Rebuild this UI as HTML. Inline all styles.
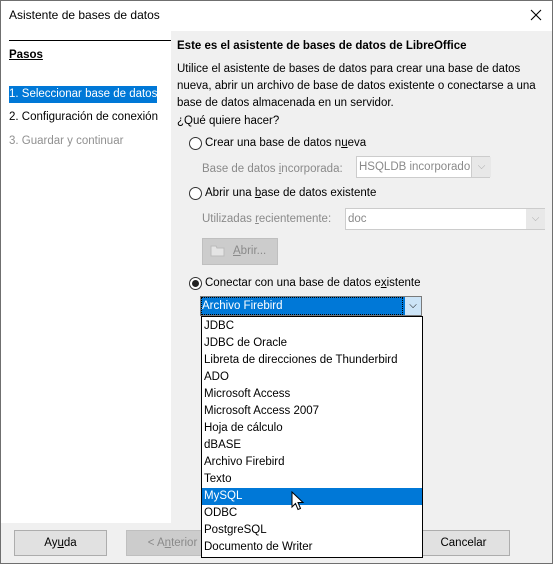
<!DOCTYPE html>
<html><head><style>
body{margin:0;width:553px;height:564px;overflow:hidden;font-family:"Liberation Sans",sans-serif;font-size:11.5px;color:#000;background:#f0f0f0;position:relative}
.a{position:absolute;white-space:nowrap}
.g{color:#8a8a8a}
.rad{position:absolute;width:11px;height:11px;border:1px solid #333;border-radius:50%;background:#fff}
.btn{position:absolute;height:24px;border:1px solid #adadad;background:#e1e1e1;text-align:center;line-height:24px}
.it{height:17px;line-height:17px;padding-left:2px}
</style></head><body>
<div class="a" style="left:0;top:0;width:551px;height:562px;border:1px solid #6f6f6f"></div>
<div class="a" style="left:1px;top:1px;width:551px;height:30px;background:#fff"></div>
<div class="a" style="left:9px;top:8px;font-size:12px">Asistente de bases de datos</div>
<svg class="a" style="left:530px;top:9px" width="12" height="12" viewBox="0 0 12 12"><path d="M1 1L11 11M11 1L1 11" stroke="#000" stroke-width="1.1"/></svg>
<div class="a" style="left:1px;top:31px;width:170px;height:492px;background:#fff"></div>
<div class="a" style="left:9px;top:40px;width:162px;height:1px;background:#000"></div>
<div class="a" style="left:9px;top:49px;font-weight:bold;text-decoration:underline">Pasos</div>
<div class="a" style="left:9px;top:86px;width:148px;height:17px;background:#0078d7;color:#fff;line-height:17px">1. Seleccionar base de datos</div>
<div class="a" style="left:9px;top:111px">2. Configuración de conexión</div>
<div class="a g" style="left:9px;top:135px;color:#909090">3. Guardar y continuar</div>
<div class="a" style="left:177px;top:40px;font-weight:bold">Este es el asistente de bases de datos de LibreOffice</div>
<div class="a" style="left:177px;top:61px;line-height:17px">Utilice el asistente de bases de datos para crear una base de datos<br>nueva, abrir un archivo de base de datos existente o conectarse a una<br>base de datos almacenada en un servidor.</div>
<div class="a" style="left:177px;top:115px">¿Qué quiere hacer?</div>
<div class="rad" style="left:189px;top:137px"></div>
<div class="a" style="left:205px;top:137px">Crear una base de datos n<u>u</u>eva</div>
<div class="a g" style="left:202px;top:163px">Base de datos <u>i</u>ncorporada:</div>
<div class="a" style="left:356px;top:156px;width:134px;height:22px;border:1px solid #ccc;background:#fff;color:#8a8a8a;line-height:20px;padding-left:2px;box-sizing:border-box">HSQLDB incorporado</div>
<div class="a" style="left:471px;top:157px;width:19px;height:20px;background:#e8e8e8;border-left:1px solid #ccc;color:#aaa;text-align:center;font-size:10px;line-height:20px">⌵</div>
<div class="rad" style="left:189px;top:187px"></div>
<div class="a" style="left:205px;top:187px">Abrir una <u>b</u>ase de datos existente</div>
<div class="a g" style="left:202px;top:213px">Utilizadas <u>r</u>ecientemente:</div>
<div class="a" style="left:345px;top:208px;width:200px;height:22px;border:1px solid #ccc;background:#fff;color:#8a8a8a;line-height:20px;padding-left:2px;box-sizing:border-box">doc</div>
<div class="a" style="left:526px;top:209px;width:19px;height:20px;background:#e8e8e8;color:#aaa;text-align:center;font-size:10px;line-height:20px">⌵</div>
<div class="a" style="left:202px;top:238px;width:76px;height:27px;background:#cccccc;border:1px solid #bfbfbf;box-sizing:border-box;color:#8a8a8a;line-height:25px;padding-left:30px"><u>A</u>brir...</div>
<svg class="a" style="left:210px;top:244px" width="16" height="13" viewBox="0 0 16 13"><path d="M1 2h5l1 2h7v8H1z" fill="#e4e4e4" stroke="#bbb"/></svg>
<div class="rad" style="left:189px;top:277px"></div>
<div class="a" style="left:192px;top:280px;width:7px;height:7px;border-radius:50%;background:#222"></div>
<div class="a" style="left:205px;top:277px">Conectar con una base de datos e<u>x</u>istente</div>
<div class="a" style="left:200px;top:296px;width:222px;height:20px;border:1px solid #7a7a7a;box-sizing:border-box;background:#0078d7"></div>
<div class="a" style="left:202px;top:298px;width:200px;height:16px;outline:1px dotted #000;color:#fff;line-height:16px">Archivo Firebird</div>
<div class="a" style="left:405px;top:297px;width:16px;height:18px;background:#cce4f7;text-align:center;font-size:10px;line-height:18px">⌵</div>
<div class="btn" style="left:14px;top:530px;width:91px"><span>Ay<u>u</u>da</span></div>
<div class="btn" style="left:126px;top:530px;width:91px;color:#8a8a8a;background:#cccccc;border-color:#bfbfbf">&lt; A<u>n</u>terior</div>
<div class="btn" style="left:315px;top:530px;width:93px;background:#cccccc;border-color:#bfbfbf"></div>
<div class="btn" style="left:417px;top:530px;width:91px">Cancelar</div>
<div class="a" style="left:201px;top:316px;width:220px;height:239px;border:1px solid #000;background:#fff;box-sizing:content-box;padding-top:1px">
<div class="it">JDBC</div><div class="it">JDBC de Oracle</div><div class="it">Libreta de direcciones de Thunderbird</div><div class="it">ADO</div><div class="it">Microsoft Access</div><div class="it">Microsoft Access 2007</div><div class="it">Hoja de cálculo</div><div class="it">dBASE</div><div class="it">Archivo Firebird</div><div class="it">Texto</div><div class="it" style="background:#0078d7;color:#fff">MySQL</div><div class="it">ODBC</div><div class="it">PostgreSQL</div><div class="it">Documento de Writer</div>
</div>
<svg class="a" style="left:291px;top:491px" width="14" height="22" viewBox="0 0 14 22"><path d="M1 1 L1 16 L4.5 12.5 L7 18.5 L9.5 17.5 L7 11.5 L12 11.5 Z" fill="#fff" stroke="#000" stroke-width="1"/></svg>
</body></html>
